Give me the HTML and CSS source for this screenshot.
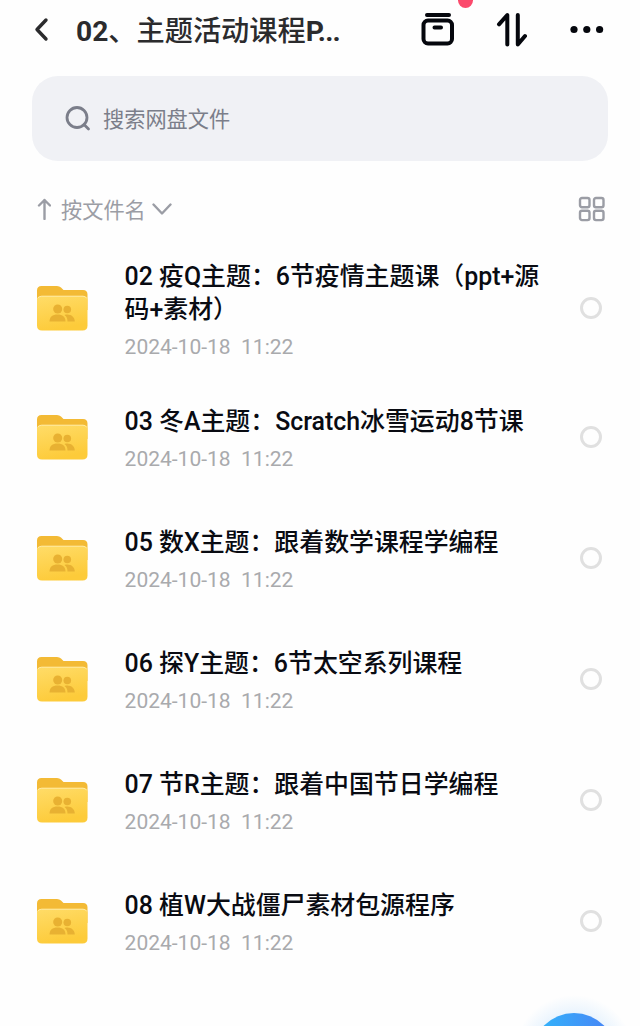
FILE: index.html
```html
<!DOCTYPE html>
<html lang="zh-CN">
<head>
  <meta charset="UTF-8" />
  <meta name="viewport" content="width=device-width, initial-scale=1.0" />
  <title>网盘文件</title>
  <link rel="stylesheet" href="styles.css">
</head>
<body>
  <header class="topbar">
    <svg class="back" width="16" height="26" viewBox="0 0 16 26"><path d="M13 3 4 12.500l9 9.500"/></svg>
    <h1><b>02</b>、主题活动课程<b class="cut">P...</b></h1>
    <div class="actions">
      <div class="box-btn">
        <svg width="34" height="34" viewBox="0 0 34 34"><path d="M6 2h22M13.500 14.500h6.500"/><rect x="2.500" y="7.500" width="28.500" height="23" rx="4.500"/></svg>
        <span class="dot"></span>
      </div>
      <svg class="sort-btn" width="32" height="36" viewBox="0 0 32 36"><path d="M3 12.300 11.300 3v29.500M21.800 3v29.500l7.200-8.500"/></svg>
      <svg class="more" width="36" height="10" viewBox="0 0 36 10"><circle cx="5" cy="4.500" r="3.600"/><circle cx="17.800" cy="4.500" r="3.600"/><circle cx="30.600" cy="4.500" r="3.600"/></svg>
    </div>
  </header>

  <div class="search">
    <svg width="26" height="26" viewBox="0 0 26 26"><circle cx="12" cy="11.500" r="10"/><path d="m19 18.500 4.500 4.500"/></svg>
    <span>搜索网盘文件</span>
  </div>

  <div class="sortbar">
    <svg width="14" height="22" viewBox="0 0 14 22"><path d="M7.500 21V2M2 7.500 7.500 2 13 7.500"/></svg>
    <span>按文件名</span>
    <svg class="down" width="20" height="14" viewBox="0 0 20 14"><path d="m1.500 2.500 8.500 9 8.500-9"/></svg>
    <svg class="grid" width="28" height="26" viewBox="0 0 28 26"><rect x="2" y="2" width="9.500" height="9.300" rx="2"/><rect x="16" y="2" width="9.500" height="9.300" rx="2"/><rect x="2" y="14.800" width="9.500" height="9.300" rx="2"/><rect x="16" y="14.800" width="9.500" height="9.300" rx="2"/></svg>
  </div>

  <!-- folder icon shared by all rows -->
  <svg class="defs" width="0" height="0">
    <defs>
      <linearGradient id="front" x1="0" y1="0" x2="0.300" y2="1">
        <stop offset="0" stop-color="#ffdc68"/>
        <stop offset="1" stop-color="#fdcb3a"/>
      </linearGradient>
      <symbol id="folder" viewBox="0 0 52 46">
        <path fill="#f3ba35" d="M1 5.500Q1 1 5.500 1H21q2.500 0 4 1.500L27.500 5H47q4.500 0 4.500 4.500V25H1z"/>
        <path fill="url(#front)" d="M1 15q0-4 4-4h42.500q4 0 4 4v25.500q0 5-5 5H6q-5 0-5-5z"/>
        <path fill="none" stroke="#ffeba5" d="M2 13q1-1.800 3.500-1.800h41.500q2.500 0 3.500 1.800"/>
        <g fill="#e8b132">
          <circle cx="21.700" cy="24" r="4.500"/>
          <circle cx="31.300" cy="24.500" r="3.800"/>
          <path d="M13.500 36.500c0-4.500 3-7 8-7s8 2.500 8 7z"/>
          <path d="M28.500 30c5.500-1.500 10.200 1.500 10.300 6.500h-7.300c0-3-.8-5-3-6.500z"/>
        </g>
      </symbol>
    </defs>
  </svg>

  <ul class="files">
    <li class="file tall">
      <svg class="folder"><use href="#folder"/></svg>
      <div class="info">
        <div class="name">02 疫Q主题：6节疫情主题课（ppt+源码+素材）</div>
        <div class="date">2024-10-18&nbsp; 11:22</div>
      </div>
      <span class="check"></span>
    </li>
    <li class="file">
      <svg class="folder"><use href="#folder"/></svg>
      <div class="info">
        <div class="name">03 冬A主题：Scratch冰雪运动8节课</div>
        <div class="date">2024-10-18&nbsp; 11:22</div>
      </div>
      <span class="check"></span>
    </li>
    <li class="file">
      <svg class="folder"><use href="#folder"/></svg>
      <div class="info">
        <div class="name">05 数X主题：跟着数学课程学编程</div>
        <div class="date">2024-10-18&nbsp; 11:22</div>
      </div>
      <span class="check"></span>
    </li>
    <li class="file">
      <svg class="folder"><use href="#folder"/></svg>
      <div class="info">
        <div class="name">06 探Y主题：6节太空系列课程</div>
        <div class="date">2024-10-18&nbsp; 11:22</div>
      </div>
      <span class="check"></span>
    </li>
    <li class="file">
      <svg class="folder"><use href="#folder"/></svg>
      <div class="info">
        <div class="name">07 节R主题：跟着中国节日学编程</div>
        <div class="date">2024-10-18&nbsp; 11:22</div>
      </div>
      <span class="check"></span>
    </li>
    <li class="file">
      <svg class="folder"><use href="#folder"/></svg>
      <div class="info">
        <div class="name">08 植W大战僵尸素材包源程序</div>
        <div class="date">2024-10-18&nbsp; 11:22</div>
      </div>
      <span class="check"></span>
    </li>
  </ul>

  <!-- top of the floating button -->
  <svg class="fab" width="140" height="46" viewBox="0 0 140 46">
    <defs>
      <linearGradient id="blue">
        <stop offset="0" stop-color="#30b8fb"/>
        <stop offset="1" stop-color="#4a80f5"/>
      </linearGradient>
      <radialGradient id="glow">
        <stop offset="0.650" stop-color="#3ca0fa" stop-opacity="0.120"/>
        <stop offset="1" stop-color="#3ca0fa" stop-opacity="0"/>
      </radialGradient>
    </defs>
    <circle cx="74" cy="75" r="60" fill="url(#glow)"/>
    <circle cx="74" cy="75" r="42" fill="url(#blue)"/>
  </svg>
</body>
</html>
```

FILE: styles.css
```css
* {
  box-sizing: border-box;
}
body {
  margin: 0;
  height: 1026px;
  position: relative;
  background: #fefefe;
  font-family: Roboto, "Noto Sans CJK SC", sans-serif;
}
svg {
  flex: none;
  fill: none;
  stroke-linecap: round;
  stroke-linejoin: round;
}
.topbar {
  display: flex;
  align-items: center;
  height: 60px;
  padding: 0 35px 0 33px;
}
.back {
  stroke: #2b2b2d;
  stroke-width: 3.4;
}
h1 {
  margin: 0 0 0 27px;
  padding-top: 4px;
  font-size: 28.2px;
  font-weight: 500;
  line-height: 40px;
  color: #2b2b2d;
  white-space: nowrap;
}
h1 b {
  font-weight: 700;
}
.cut {
  letter-spacing: -0.8px;
}
.actions {
  display: flex;
  align-items: center;
  margin-left: auto;
  stroke: #05070d;
  stroke-width: 4;
}
.box-btn {
  position: relative;
  height: 34px;
}
.dot {
  position: absolute;
  top: -20px;
  left: 37px;
  width: 15px;
  height: 15px;
  border-radius: 50%;
  background: #fb4a6c;
}
.sort-btn {
  margin-left: 41px;
}
.more {
  margin-left: 41px;
  fill: #05070d;
  stroke: none;
}
.search {
  display: flex;
  align-items: center;
  height: 85px;
  margin: 16px 32px 0;
  padding-left: 33px;
  border-radius: 26px;
  background: #f0f1f5;
  color: #7b7e8a;
  font-size: 21.2px;
}
.search span {
  padding-bottom: 2px;
}
.search svg {
  margin-right: 12px;
  stroke: #7b7e8a;
  stroke-width: 2.8;
}
.sortbar {
  display: flex;
  align-items: center;
  height: 48px;
  margin-top: 24px;
  padding: 0 34px 0 37px;
  color: #9b9da5;
  font-size: 21.2px;
}
.sortbar svg {
  stroke: #9b9da5;
  stroke-width: 2.4;
}
.sortbar span {
  margin: 0 6px 0 10px;
  padding-bottom: 2px;
}
.sortbar .grid {
  margin-left: auto;
}
.defs {
  position: absolute;
}
.files {
  margin: 6px 0 0;
  padding: 0;
  list-style: none;
}
.file {
  display: flex;
  align-items: center;
  height: 121px;
  padding: 0 38px 0 36px;
}
.tall {
  height: 137px;
}
.folder {
  width: 52px;
  height: 46px;
}
.info {
  width: 430px;
  margin-left: 36.6px;
  padding-top: 4px;
}
.name {
  font-size: 24.9px;
  font-weight: 500;
  line-height: 33px;
  color: #090b12;
}
.date {
  margin-top: 8px;
  font-size: 21px;
  line-height: 26px;
  color: #a9aaad;
}
.check {
  width: 22px;
  height: 22px;
  margin-left: auto;
  border: 3px solid #e0e0e0;
  border-radius: 50%;
}
.fab {
  position: absolute;
  left: 500px;
  bottom: 0;
}
```
